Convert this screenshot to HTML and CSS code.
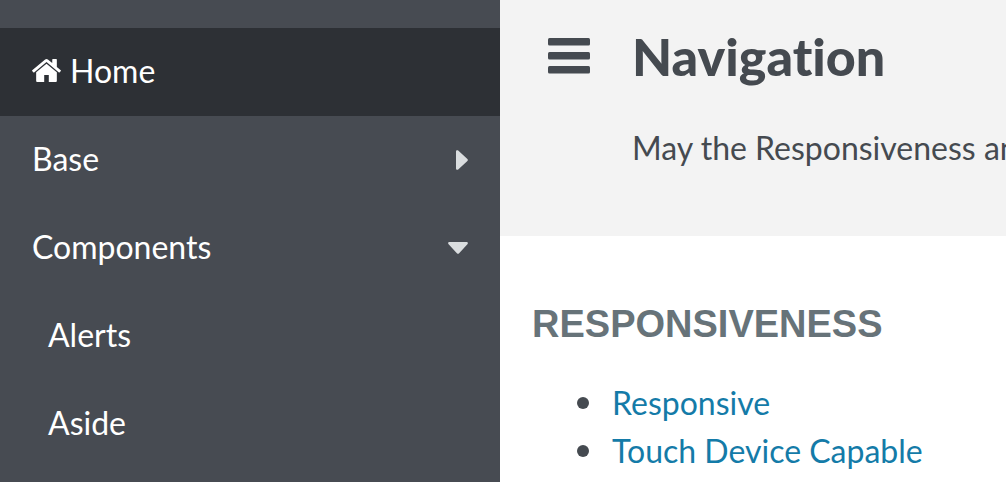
FILE: index.html
```html
<!DOCTYPE html>
<html lang="en">
<head>
<meta charset="utf-8">
<title>Navigation</title>
<link rel="stylesheet" href="styles.css">
</head>
<body>
<div class="layout">
  <nav class="sidebar" aria-label="Main">
    <a class="item item-active" href="#home"><svg class="home-icon" viewBox="24 253 1616 1283" preserveAspectRatio="none" aria-hidden="true"><path d="M1408 992v480q0 26-19 45t-45 19h-384v-384h-256v384h-384q-26 0-45-19t-19-45v-480q0-1 .5-3t.5-3l575-474 575 474q1 2 1 6zm223-69l-62 74q-8 9-21 11h-3q-13 0-21-7l-692-577-692 577q-12 8-24 7-13-2-21-11l-62-74q-8-10-7-23.500t11-21.500l719-599q32-26 76-26t76 26l244 204v-195q0-14 9-23t23-9h192q14 0 23 9t9 23v408l219 182q10 8 11 21.500t-7 23.500z"/></svg>Home</a>
    <a class="item" href="#base">Base<svg class="caret caret-right" viewBox="0 0 12 20" aria-hidden="true"><path d="M0 1.500C0 .2 1.300-.3 2.200.6l9.200 8.500c.6.500.6 1.300 0 1.800l-9.200 8.500C1.300 20.300 0 19.800 0 18.500z"/></svg></a>
    <a class="item" href="#components">Components<svg class="caret caret-down" viewBox="0 0 20 12" aria-hidden="true"><path d="M1.500 0C.2 0-.3 1.300.6 2.200l8.500 9.200c.5.600 1.300.6 1.800 0l8.500-9.200C20.300 1.300 19.800 0 18.500 0z"/></svg></a>
    <a class="item item-child" href="#alerts">Alerts</a>
    <a class="item item-child" href="#aside">Aside</a>
  </nav>
  <main class="main">
    <header class="hero">
      <button class="menu" type="button" aria-label="Toggle navigation"><svg class="menu-icon" viewBox="0 0 42 36" aria-hidden="true"><rect width="42" height="7.500" rx="1.500"/><rect y="14" width="42" height="7.500" rx="1.500"/><rect y="28" width="42" height="7.500" rx="1.500"/></svg></button>
      <div class="intro">
        <h1 class="title">Navigation</h1>
        <p class="lead">May the Responsiveness and</p>
      </div>
    </header>
    <section class="content">
      <h2 class="section-title">RESPONSIVENESS</h2>
      <ul class="links">
        <li><a href="#responsive">Responsive</a></li>
        <li><a href="#touch">Touch Device Capable</a></li>
      </ul>
    </section>
  </main>
</div>
</body>
</html>
```
FILE: styles.css
```css
* { box-sizing: border-box; }
body {
  margin: 0;
  background: #fff;
  color: #454a50;
  font-family: Lato, sans-serif;
  font-size: 32px;
  font-variant-ligatures: none;
}
.layout { display: flex; min-height: 100vh; }
.sidebar { flex: 0 0 500px; padding-top: 28px; background: #474b52; }
.item {
  display: flex;
  align-items: center;
  height: 88px;
  padding: 0 32px 4px;
  color: #fff;
  text-decoration: none;
}
.item-active { background: #2d3035; }
.item-child { padding-left: 48px; }
.home-icon { width: 29px; height: 23px; margin-right: 9px; fill: #fff; }
.caret { margin: 4px 0 0 auto; fill: #dadddf; }
.caret-right { width: 12px; height: 20px; }
.caret-down { width: 20px; height: 12px; }
.main { flex: 1; min-width: 0; }
.hero {
  display: flex;
  align-items: flex-start;
  gap: 42px;
  padding: 26px 0 68px 48px;
  background: #f3f3f3;
  overflow: hidden;
}
.menu { flex: none; margin: 0; padding: 12px 0 0; border: 0; background: none; }
.menu-icon { display: block; width: 42px; height: 36px; fill: #454a50; }
.intro { white-space: nowrap; }
.title { margin: 0; font-size: 52px; line-height: 60px; font-weight: 900; }
.lead { margin: 42px 0 0; font-size: 32px; line-height: 40px; }
.content { padding: 64px 32px 0; }
.section-title {
  margin: 0;
  color: #677379;
  font: 700 38px/48px "Liberation Sans", sans-serif;
}
.links { margin: 31px 0 0; padding-left: 45px; line-height: 48px; list-style: none; }
.links li { display: flex; align-items: center; gap: 23px; }
.links li::before {
  content: "";
  width: 12px;
  height: 12px;
  border-radius: 50%;
  background: #454a50;
}
.links a { color: #147ba8; text-decoration: none; }
```
